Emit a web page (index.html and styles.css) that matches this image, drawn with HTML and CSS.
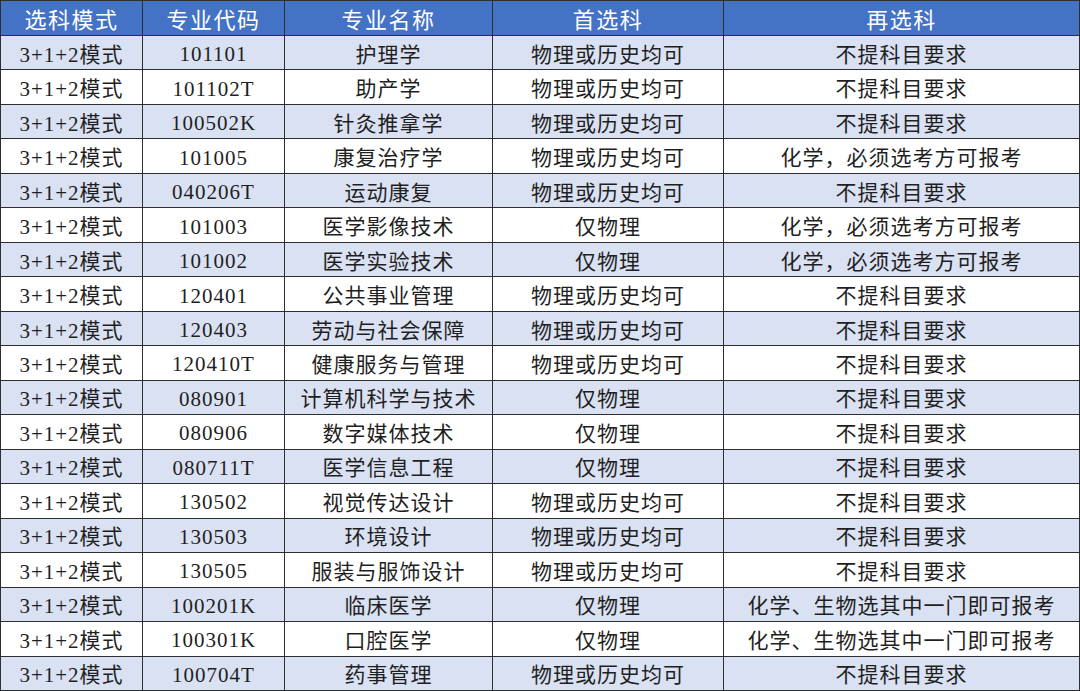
FILE: index.html
```html
<!DOCTYPE html>
<html lang="zh">
<head>
<meta charset="utf-8">
<link rel="stylesheet" href="styles.css">
</head>
<body>
<div class="grid">
  <div class="row head"><div>选科模式</div><div>专业代码</div><div>专业名称</div><div>首选科</div><div>再选科</div></div>
  <div class="row alt"><div>3+1+2模式</div><div>101101</div><div>护理学</div><div>物理或历史均可</div><div>不提科目要求</div></div>
  <div class="row"><div>3+1+2模式</div><div>101102T</div><div>助产学</div><div>物理或历史均可</div><div>不提科目要求</div></div>
  <div class="row alt"><div>3+1+2模式</div><div>100502K</div><div>针灸推拿学</div><div>物理或历史均可</div><div>不提科目要求</div></div>
  <div class="row"><div>3+1+2模式</div><div>101005</div><div>康复治疗学</div><div>物理或历史均可</div><div>化学，必须选考方可报考</div></div>
  <div class="row alt"><div>3+1+2模式</div><div>040206T</div><div>运动康复</div><div>物理或历史均可</div><div>不提科目要求</div></div>
  <div class="row"><div>3+1+2模式</div><div>101003</div><div>医学影像技术</div><div>仅物理</div><div>化学，必须选考方可报考</div></div>
  <div class="row alt"><div>3+1+2模式</div><div>101002</div><div>医学实验技术</div><div>仅物理</div><div>化学，必须选考方可报考</div></div>
  <div class="row"><div>3+1+2模式</div><div>120401</div><div>公共事业管理</div><div>物理或历史均可</div><div>不提科目要求</div></div>
  <div class="row alt"><div>3+1+2模式</div><div>120403</div><div>劳动与社会保障</div><div>物理或历史均可</div><div>不提科目要求</div></div>
  <div class="row"><div>3+1+2模式</div><div>120410T</div><div>健康服务与管理</div><div>物理或历史均可</div><div>不提科目要求</div></div>
  <div class="row alt"><div>3+1+2模式</div><div>080901</div><div>计算机科学与技术</div><div>仅物理</div><div>不提科目要求</div></div>
  <div class="row"><div>3+1+2模式</div><div>080906</div><div>数字媒体技术</div><div>仅物理</div><div>不提科目要求</div></div>
  <div class="row alt"><div>3+1+2模式</div><div>080711T</div><div>医学信息工程</div><div>仅物理</div><div>不提科目要求</div></div>
  <div class="row"><div>3+1+2模式</div><div>130502</div><div>视觉传达设计</div><div>物理或历史均可</div><div>不提科目要求</div></div>
  <div class="row alt"><div>3+1+2模式</div><div>130503</div><div>环境设计</div><div>物理或历史均可</div><div>不提科目要求</div></div>
  <div class="row"><div>3+1+2模式</div><div>130505</div><div>服装与服饰设计</div><div>物理或历史均可</div><div>不提科目要求</div></div>
  <div class="row alt"><div>3+1+2模式</div><div>100201K</div><div>临床医学</div><div>仅物理</div><div>化学、生物选其中一门即可报考</div></div>
  <div class="row"><div>3+1+2模式</div><div>100301K</div><div>口腔医学</div><div>仅物理</div><div>化学、生物选其中一门即可报考</div></div>
  <div class="row alt"><div>3+1+2模式</div><div>100704T</div><div>药事管理</div><div>物理或历史均可</div><div>不提科目要求</div></div>
</div>
</body>
</html>
```

FILE: styles.css
```css
html, body {
  margin: 0;
  padding: 0;
  background: #ffffff;
}
.grid {
  width: 1080px;
  height: 691px;
  box-sizing: border-box;
  padding: 1px;
  background: #2e2e2e;
  display: grid;
  grid-template-columns: 141px 141px 207px 230px 1fr;
  grid-template-rows: 34px repeat(19, 1fr);
  gap: 1px;
  font-family: "Liberation Serif", "Noto Sans CJK SC", serif;
  font-size: 21px;
  color: #1f1f1f;
}
.row {
  display: contents;
}
.row > div {
  background: #ffffff;
  display: flex;
  align-items: center;
  justify-content: center;
  white-space: nowrap;
  letter-spacing: 1px;
}
.row > div:nth-child(2) {
  padding-top: 4px;
}
.row.alt > div {
  background: #d9e1f2;
}
.row.head > div {
  background: #4472c4;
  color: #ffffff;
  font-size: 22px;
  letter-spacing: 1.5px;
  padding-top: 0;
}
```
